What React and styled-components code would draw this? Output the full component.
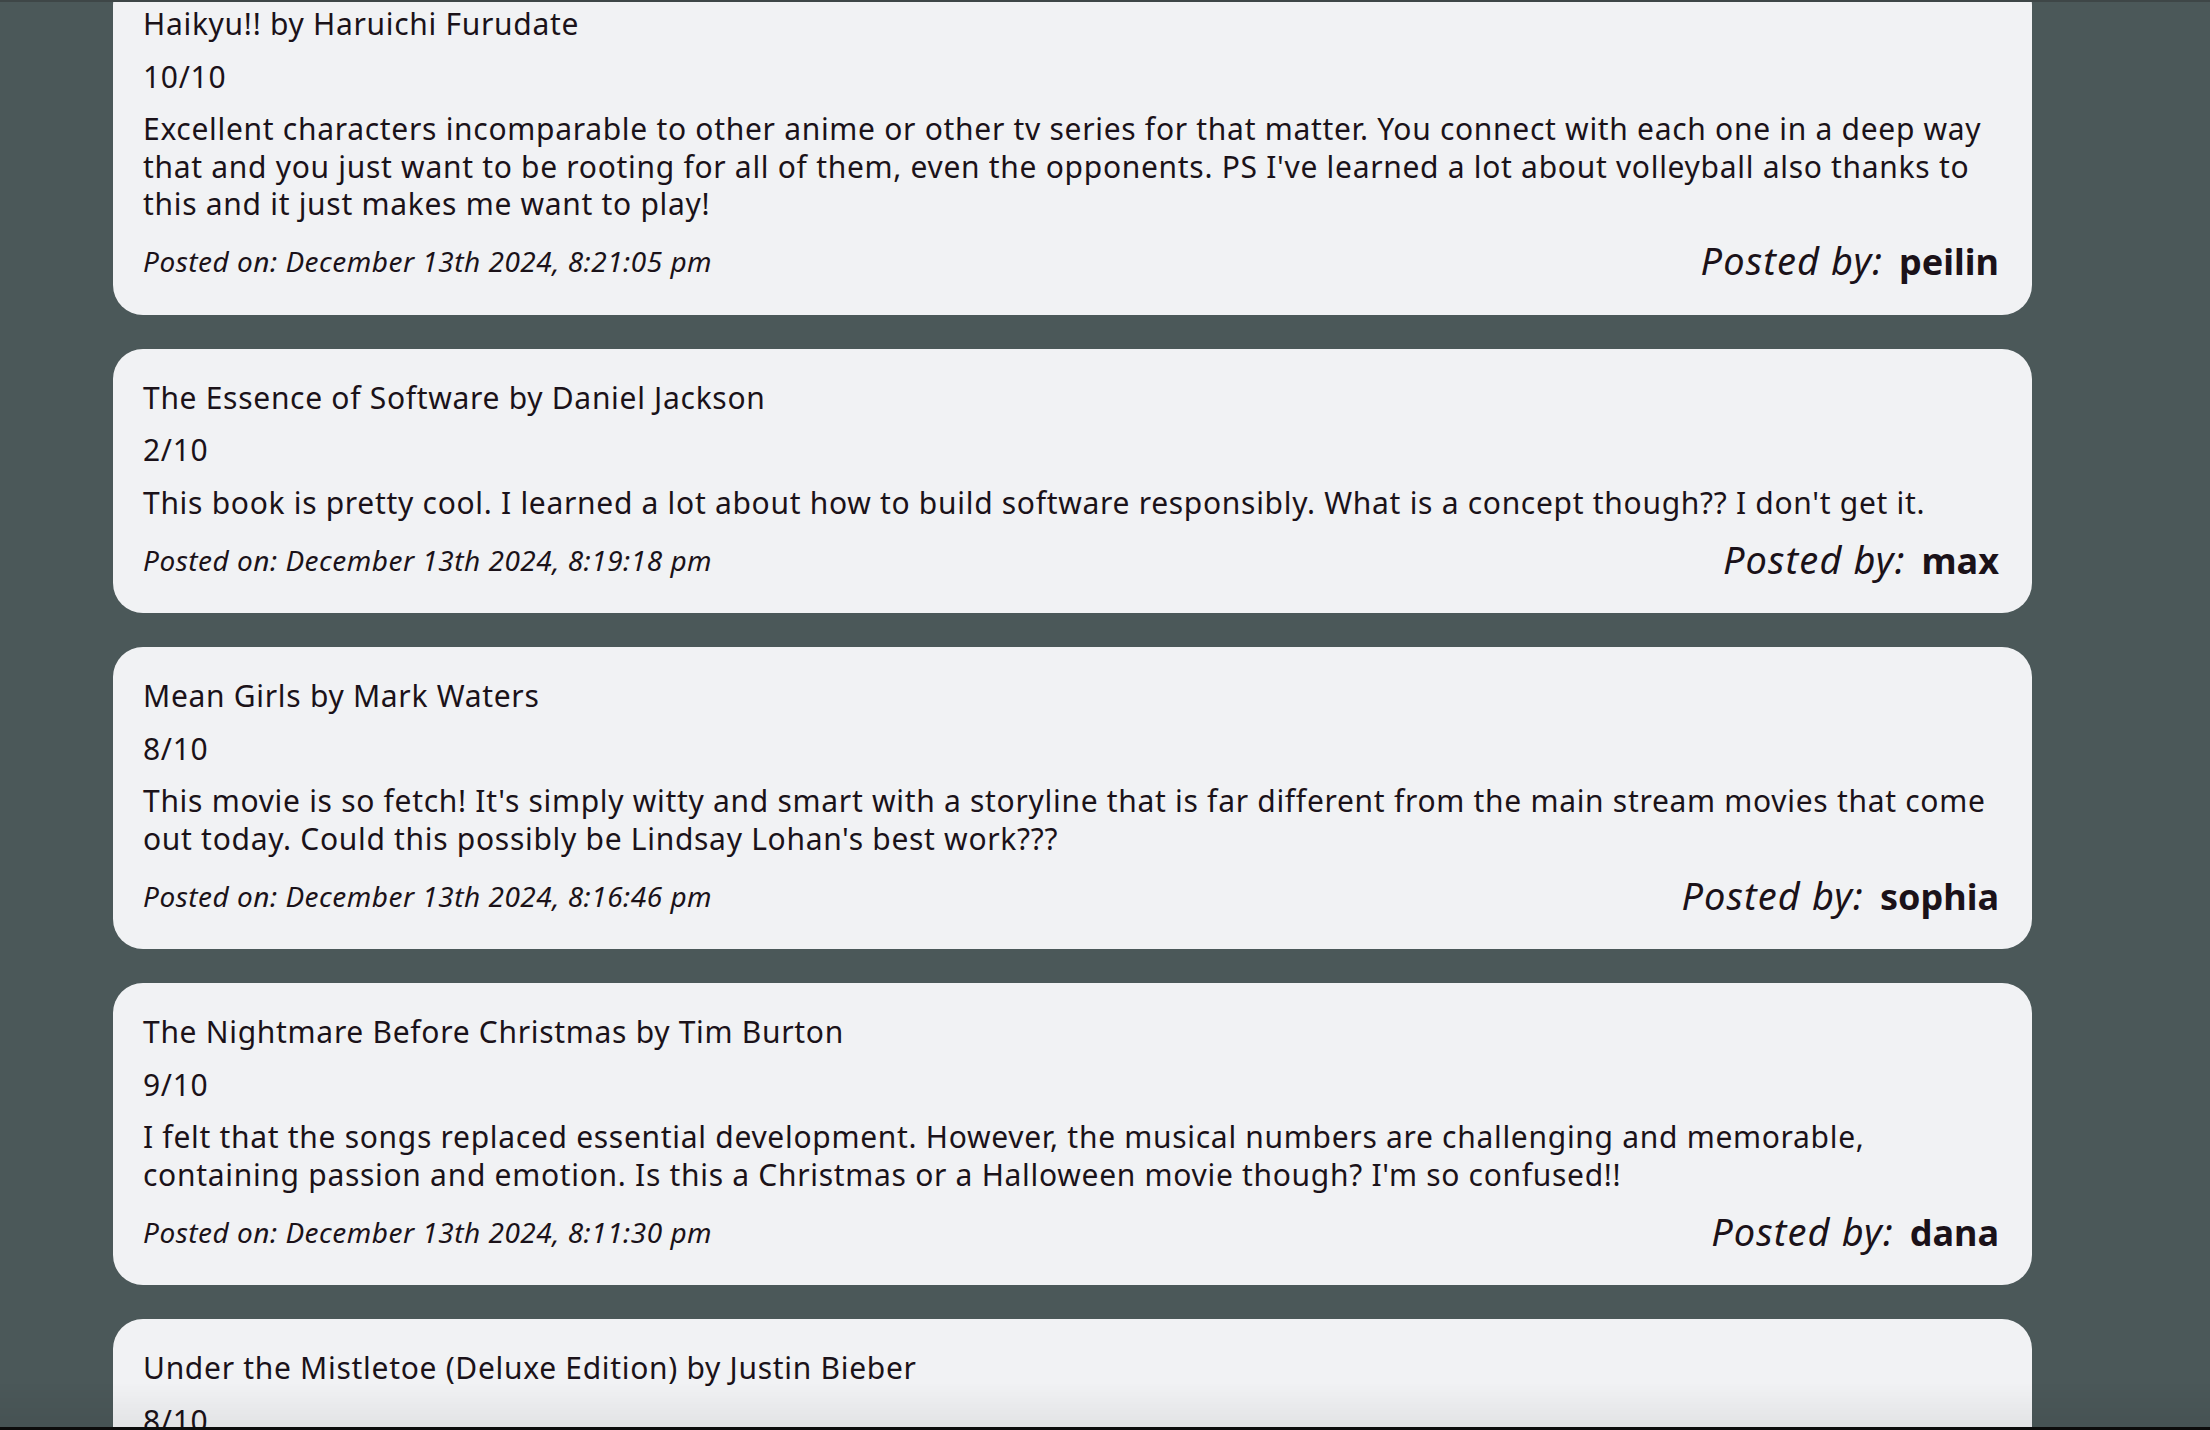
import React from "react";
import styled, { createGlobalStyle } from "styled-components";

const GlobalStyle = createGlobalStyle`
  html, body {
    margin: 0;
    padding: 0;
    background: #4b5859;
    overflow: hidden;
  }
  body {
    font-family: "Noto Sans", Lato, "DejaVu Sans", sans-serif;
    color: #1b1219;
  }
`;

const TopEdge = styled.div`
  height: 2px;
  background: #3e4647;
  position: fixed;
  top: 0;
  left: 0;
  right: 0;
  z-index: 2;
`;

const BottomEdge = styled.div`
  position: fixed;
  left: 0;
  right: 0;
  bottom: 0;
  height: 3px;
  background: #0c0c0c;
  z-index: 2;
  &::before {
    content: "";
    position: absolute;
    left: 0;
    right: 0;
    bottom: 3px;
    height: 45px;
    background: linear-gradient(to bottom, rgba(0, 0, 0, 0), rgba(0, 0, 0, 0.06));
    pointer-events: none;
  }
`;

const Page = styled.main`
  height: 1430px;
  overflow: hidden;
  padding-left: 113px;
  box-sizing: border-box;
`;

const List = styled.section`
  width: 1919px;
  display: flex;
  flex-direction: column;
  gap: 34px;
  margin-top: -25px;
`;

const Card = styled.article`
  background: #f1f2f4;
  border-radius: 30px;
  padding: 30px 33px 30px 30px;
  display: flex;
  flex-direction: column;
  gap: 15px;
`;

const Line = styled.p`
  margin: 0;
  font-size: 30px;
  line-height: 37.5px;
  letter-spacing: 0.7px;
  font-weight: 400;
`;

const Footer = styled.div`
  display: flex;
  justify-content: space-between;
  align-items: center;
  height: 47px;
`;

const PostedOn = styled.span`
  font-style: italic;
  font-size: 28px;
  letter-spacing: 0.5px;
`;

const PostedBy = styled.span`
  font-style: italic;
  font-size: 38px;
  line-height: 47px;
  letter-spacing: 1.1px;
`;

const Username = styled.strong`
  font-style: normal;
  font-weight: 700;
  font-size: 36px;
  letter-spacing: 0;
  margin-left: 16px;
`;

const reviews = [
  {
    title: "Haikyu!! by Haruichi Furudate",
    rating: "10/10",
    body:
      "Excellent characters incomparable to other anime or other tv series for that matter. You connect with each one in a deep way that and you just want to be rooting for all of them, even the opponents. PS I've learned a lot about volleyball also thanks to this and it just makes me want to play!",
    date: "December 13th 2024, 8:21:05 pm",
    user: "peilin",
  },
  {
    title: "The Essence of Software by Daniel Jackson",
    rating: "2/10",
    body:
      "This book is pretty cool. I learned a lot about how to build software responsibly. What is a concept though?? I don't get it.",
    date: "December 13th 2024, 8:19:18 pm",
    user: "max",
  },
  {
    title: "Mean Girls by Mark Waters",
    rating: "8/10",
    body:
      "This movie is so fetch! It's simply witty and smart with a storyline that is far different from the main stream movies that come out today. Could this possibly be Lindsay Lohan's best work???",
    date: "December 13th 2024, 8:16:46 pm",
    user: "sophia",
  },
  {
    title: "The Nightmare Before Christmas by Tim Burton",
    rating: "9/10",
    body:
      "I felt that the songs replaced essential development. However, the musical numbers are challenging and memorable, containing passion and emotion. Is this a Christmas or a Halloween movie though? I'm so confused!!",
    date: "December 13th 2024, 8:11:30 pm",
    user: "dana",
  },
  {
    title: "Under the Mistletoe (Deluxe Edition) by Justin Bieber",
    rating: "8/10",
    body:
      "An amazing holiday album with something for everyone. Mistletoe is a classic that I listen to every single winter.",
    date: "December 13th 2024, 8:05:12 pm",
    user: "alex",
  },
];

export default function App() {
  return (
    <>
      <GlobalStyle />
      <TopEdge />
      <Page>
        <List>
          {reviews.map((r) => (
            <Card key={r.title}>
              <Line>{r.title}</Line>
              <Line>{r.rating}</Line>
              <Line>{r.body}</Line>
              <Footer>
                <PostedOn>Posted on: {r.date}</PostedOn>
                <PostedBy>
                  Posted by:
                  <Username>{r.user}</Username>
                </PostedBy>
              </Footer>
            </Card>
          ))}
        </List>
      </Page>
      <BottomEdge />
    </>
  );
}
